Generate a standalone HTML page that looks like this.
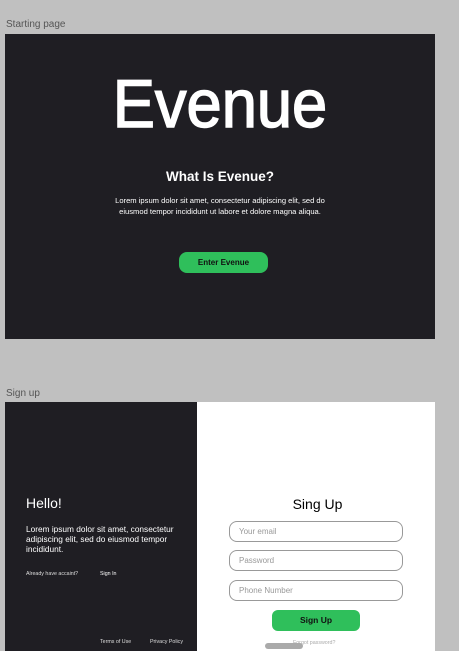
<!DOCTYPE html>
<html><head><style>
body{margin:0;width:459px;height:651px;background:#c0c0c0;position:relative;overflow:hidden;font-family:"Liberation Sans",sans-serif}
.a{position:absolute}
.lbl{font-size:10px;color:#555}
.c{text-align:center}
</style></head><body>
<div class="a lbl" style="left:6px;top:19px">Starting page</div>
<div class="a" style="left:5px;top:34px;width:430px;height:305px;background:#1f1e23"></div>
<div class="a c" style="left:5px;width:430px;top:64px;font-size:68px;line-height:80px;color:#fff;transform:scaleX(0.93);-webkit-text-stroke:1.5px #fff">Evenue</div>
<div class="a c" style="left:5px;width:430px;top:169px;font-size:13.5px;color:#fff;font-weight:bold">What Is Evenue?</div>
<div class="a c" style="left:5px;width:430px;top:196px;font-size:7.6px;line-height:10.5px;color:#fff">Lorem ipsum dolor sit amet, consectetur adipiscing elit, sed do<br>eiusmod tempor incididunt ut labore et dolore magna aliqua.</div>
<div class="a c" style="left:179px;top:252px;width:89px;height:21px;line-height:21px;border-radius:8px;background:#2fbf5b;font-size:8px;font-weight:bold;color:#111">Enter Evenue</div>

<div class="a lbl" style="left:6px;top:388px">Sign up</div>
<div class="a" style="left:5px;top:402px;width:192px;height:249px;background:#1f1e23"></div>
<div class="a" style="left:197px;top:402px;width:238px;height:249px;background:#fff"></div>
<div class="a" style="left:26px;top:495px;font-size:14px;color:#fff">Hello!</div>
<div class="a" style="left:26px;top:524px;width:170px;font-size:8.3px;line-height:10px;color:#fff">Lorem ipsum dolor sit amet, consectetur adipiscing elit, sed do eiusmod tempor incididunt.</div>
<div class="a" style="left:26px;top:571px;font-size:5.3px;color:#ddd">Already have accaint?</div>
<div class="a" style="left:100px;top:571px;font-size:5.3px;color:#fff">Sign In</div>
<div class="a" style="left:100px;top:639px;font-size:5.3px;color:#ddd">Terms of Use</div>
<div class="a" style="left:150px;top:639px;font-size:5.3px;color:#ddd">Privacy Policy</div>
<div class="a c" style="left:197px;width:241px;top:496px;font-size:14px;color:#000">Sing Up</div>
<div class="a" style="left:229px;top:521px;width:172px;height:19px;border:1px solid #999;border-radius:8px;font-size:8px;color:#999;line-height:19px;text-indent:9px">Your email</div>
<div class="a" style="left:229px;top:550px;width:172px;height:19px;border:1px solid #999;border-radius:8px;font-size:8px;color:#999;line-height:19px;text-indent:9px">Password</div>
<div class="a" style="left:229px;top:580px;width:172px;height:19px;border:1px solid #999;border-radius:8px;font-size:8px;color:#999;line-height:19px;text-indent:9px">Phone Number</div>
<div class="a c" style="left:272px;top:610px;width:88px;height:21px;line-height:21px;border-radius:6px;background:#2fbf5b;font-size:8.5px;font-weight:bold;color:#111">Sign Up</div>
<div class="a" style="left:293px;top:640px;font-size:5.3px;color:#aaa">Forgot password?</div>
<div class="a" style="left:265px;top:643px;width:38px;height:6px;border-radius:3px;background:#aaa"></div>
</body></html>
